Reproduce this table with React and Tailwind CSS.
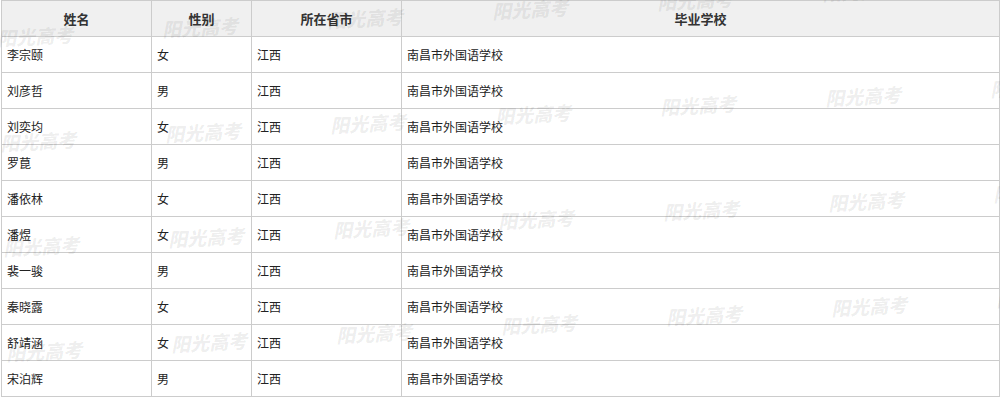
import React from "react";

const rows = [
  ["李宗颐", "女"],
  ["刘彦哲", "男"],
  ["刘奕均", "女"],
  ["罗菎", "男"],
  ["潘依林", "女"],
  ["潘煜", "女"],
  ["裴一骏", "男"],
  ["秦晓露", "女"],
  ["舒靖涵", "女"],
  ["宋泊辉", "男"],
];

const marks = [];
for (let j = 0; j < 4; j++) {
  for (let i = 0; i < 7; i++) {
    marks.push({ left: -3 + 165 * i + j * 3, top: 26 + 105 * j - 9 * i });
  }
}

const font = {};

export default function App() {
  return (
    <div
      className="relative w-[1000px] h-[411px] overflow-hidden bg-white text-[#333]"
      style={{ fontFamily: '"Noto Sans CJK SC", "Noto Sans", sans-serif' }}
    >
      <div className="ml-px w-[999px] border-l border-t border-[#cccccc]">
        <div className="grid grid-cols-[150px_100px_150px_598px] h-9 bg-[#f0f0f0] text-[13px] font-bold">
          <div className="flex items-center justify-center border-r border-b border-[#cccccc]">姓名</div>
          <div className="flex items-center justify-center border-r border-b border-[#cccccc]">性别</div>
          <div className="flex items-center justify-center border-r border-b border-[#cccccc]">所在省市</div>
          <div className="flex items-center justify-center border-r border-b border-[#cccccc]">毕业学校</div>
        </div>
        {rows.map(([name, sex]) => (
          <div key={name} className="grid grid-cols-[150px_100px_150px_598px] h-9 text-[12px] text-[#222]">
            <div className="flex items-center pl-[5px] border-r border-b border-[#cccccc]">{name}</div>
            <div className="flex items-center pl-[5px] border-r border-b border-[#cccccc]">{sex}</div>
            <div className="flex items-center pl-[5px] border-r border-b border-[#cccccc]">江西</div>
            <div className="flex items-center pl-[5px] border-r border-b border-[#cccccc]">南昌市外国语学校</div>
          </div>
        ))}
      </div>
      <div className="pointer-events-none absolute inset-0">
        {marks.map((m, k) => (
          <span
            key={k}
            className="absolute -rotate-3 whitespace-nowrap text-[19px] leading-[19px] font-black italic text-black/[0.07]"
            style={{ left: m.left, top: m.top }}
          >
            阳光高考
          </span>
        ))}
      </div>
    </div>
  );
}
